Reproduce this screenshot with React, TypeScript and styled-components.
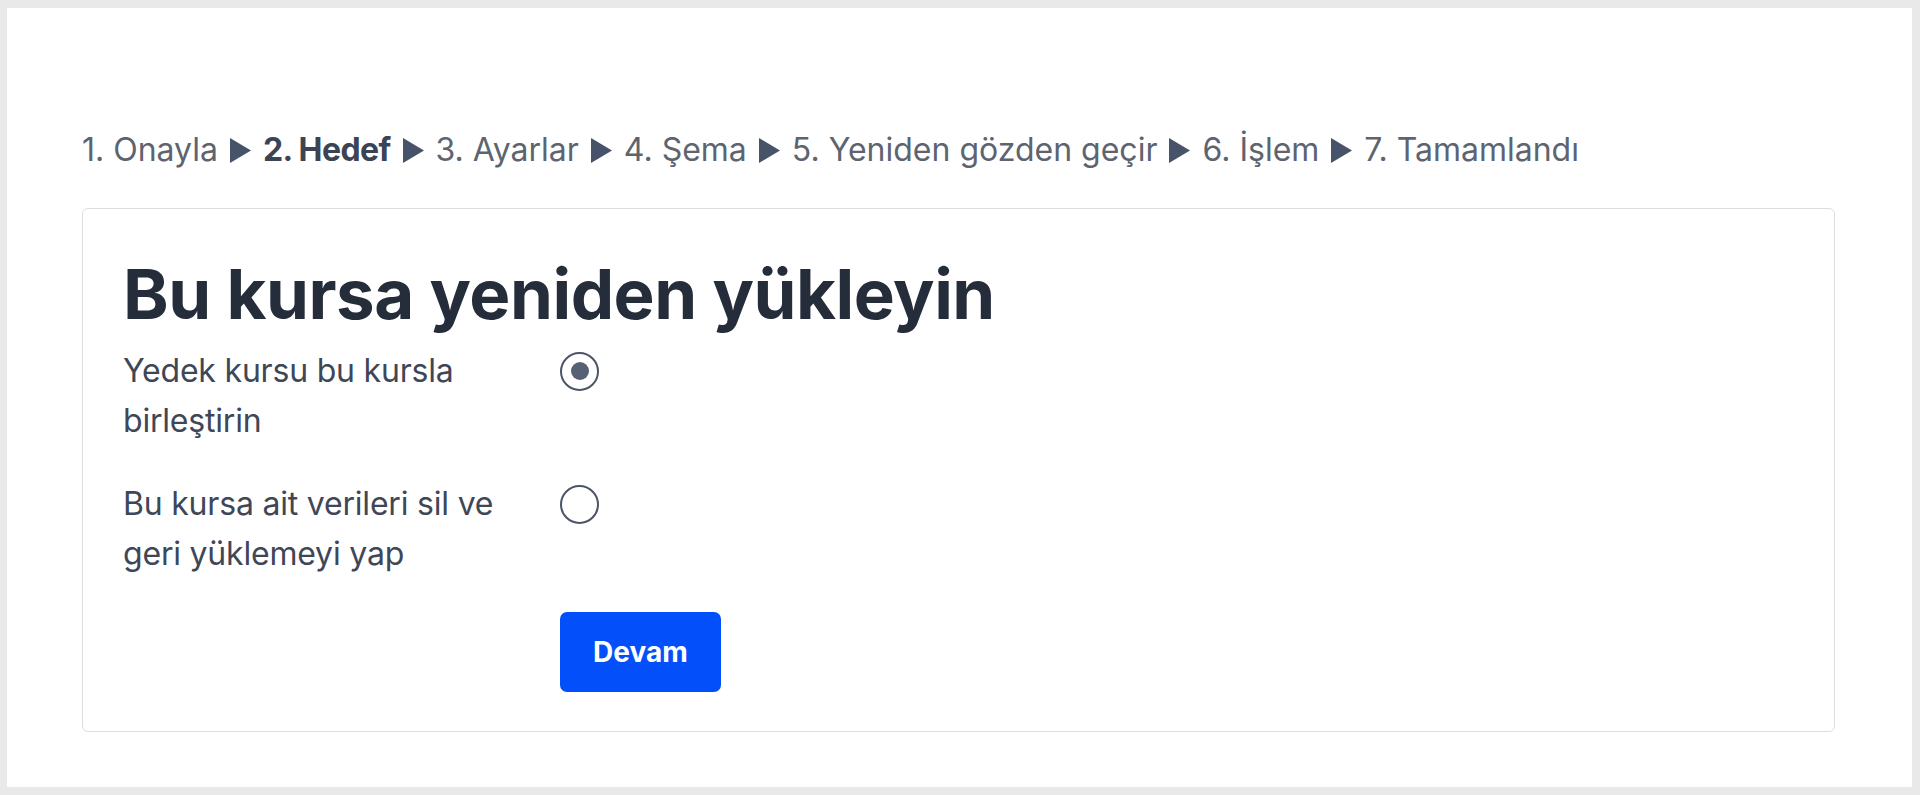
import React from "react";
import styled, { createGlobalStyle } from "styled-components";

const Global = createGlobalStyle`
  html, body {
    margin: 0;
    padding: 0;
    background: #e9e9e9;
  }
  body {
    font-family: Inter, "Noto Sans", "Liberation Sans", sans-serif;
  }
  * { box-sizing: border-box; }
`;

const Frame = styled.div`
  padding: 8px 8px 8px 7px;
  height: 795px;
`;

const Panel = styled.main`
  background: #ffffff;
  height: 779px;
  padding: 122px 77px 0 75px;
`;

const Crumbs = styled.nav`
  display: flex;
  align-items: center;
  gap: 12px;
  font-size: 32px;
  line-height: 40px;
  color: #5d6470;
  white-space: nowrap;
`;

const Step = styled.span<{ $current?: boolean }>`
  font-weight: ${(p) => (p.$current ? 700 : 400)};
  color: ${(p) => (p.$current ? "#3a4455" : "#5d6470")};
  letter-spacing: ${(p) => (p.$current ? "-0.6px" : "0")};
`;

const Arrow = styled.svg`
  width: 21px;
  height: 25px;
  flex: none;
  fill: #475369;
`;

const Card = styled.section`
  margin-top: 38px;
  border: 1px solid #dedede;
  border-radius: 6px;
  padding: 44px 40px 39px;
`;

const Title = styled.h2`
  margin: 0 0 11px;
  font-size: 69px;
  line-height: 82px;
  font-weight: 700;
  color: #252d3a;
  letter-spacing: -0.5px;
`;

const Row = styled.div`
  display: grid;
  grid-template-columns: 400px auto;
  column-gap: 37px;
  margin-bottom: 33px;
`;

const Label = styled.label`
  font-size: 32px;
  line-height: 50px;
  color: #3f4757;
  letter-spacing: -0.2px;
`;

const RadioCell = styled.div`
  height: 50px;
  display: flex;
  align-items: center;
`;

const Radio = styled.span<{ $checked?: boolean }>`
  width: 39px;
  height: 39px;
  border-radius: 50%;
  border: 2.5px solid #4b5566;
  display: flex;
  align-items: center;
  justify-content: center;
  &::after {
    content: "";
    width: 18px;
    height: 18px;
    border-radius: 50%;
    background: #566175;
    display: ${(p) => (p.$checked ? "block" : "none")};
  }
`;

const Actions = styled.div`
  padding-left: 437px;
`;

const Button = styled.button`
  height: 80px;
  padding: 0 33px;
  border: none;
  border-radius: 7px;
  background: #0350fa;
  color: #ffffff;
  font-family: inherit;
  font-size: 28px;
  font-weight: 700;
  cursor: pointer;
`;

const steps = [
  "1. Onayla",
  "2. Hedef",
  "3. Ayarlar",
  "4. Şema",
  "5. Yeniden gözden geçir",
  "6. İşlem",
  "7. Tamamlandı",
];

export default function App() {
  return (
    <Frame>
      <Global />
      <Panel>
        <Crumbs>
          {steps.map((s, i) => (
            <React.Fragment key={s}>
              {i > 0 && (
                <Arrow viewBox="0 0 21 25">
                  <polygon points="0,0 21,12.5 0,25" />
                </Arrow>
              )}
              <Step $current={i === 1}>{s}</Step>
            </React.Fragment>
          ))}
        </Crumbs>
        <Card>
          <Title>Bu kursa yeniden yükleyin</Title>
          <Row>
            <Label>Yedek kursu bu kursla birleştirin</Label>
            <RadioCell>
              <Radio $checked />
            </RadioCell>
          </Row>
          <Row>
            <Label>Bu kursa ait verileri sil ve geri yüklemeyi yap</Label>
            <RadioCell>
              <Radio />
            </RadioCell>
          </Row>
          <Actions>
            <Button>Devam</Button>
          </Actions>
        </Card>
      </Panel>
    </Frame>
  );
}
